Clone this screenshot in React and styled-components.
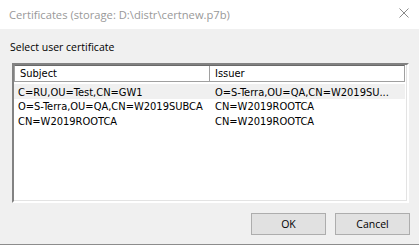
import React from "react";
import styled, { createGlobalStyle } from "styled-components";

const GlobalStyle = createGlobalStyle`
  html, body {
    margin: 0;
    padding: 0;
    background: #f0f0f0;
  }
`;

const uiFont = `"Open Sans", "Noto Sans", sans-serif`;
const listFont = `"DejaVu Sans Condensed", "DejaVu Sans", "Liberation Sans", sans-serif`;

const Window = styled.div`
  width: 419px;
  height: 245px;
  display: flex;
  flex-direction: column;
  background: #f0f0f0;
  box-sizing: border-box;
  border-bottom: 1px solid #8c8c8c;
  font-family: ${uiFont};
`;

const TitleBar = styled.div`
  height: 29px;
  flex: none;
  background: #ffffff;
  display: flex;
  align-items: center;
  justify-content: space-between;
  padding: 0 10px 0 9px;
`;

const Title = styled.span`
  font-size: 11.2px;
  color: #999999;
  margin-top: -1px;
`;

const CloseButton = styled.div`
  width: 10px;
  height: 10px;
  margin-top: -3px;
  display: flex;
`;

const Body = styled.div`
  flex: 1;
  display: flex;
  flex-direction: column;
  padding: 10px 10px 0 12px;
`;

const Label = styled.div`
  font-size: 10.5px;
  line-height: 16px;
  color: #000;
  margin-left: -2px;
`;

const ListBox = styled.div`
  margin-top: 8px;
  height: 140px;
  box-sizing: border-box;
  background: #ffffff;
  border-style: solid;
  border-width: 2px;
  border-color: #828282 #ffffff #ffffff #828282;
  box-shadow: inset -1px -1px 0 #e3e3e3;
  display: flex;
  flex-direction: column;
  font-family: ${listFont};
  font-size: 11px;
  color: #000;
`;

const Header = styled.div`
  display: flex;
  height: 17px;
  box-sizing: border-box;
  margin-right: 2px;
  border: 1px solid #a0a0a0;
  border-top-color: #696969;
  background: #ffffff;
`;

const HeaderCell = styled.div`
  width: ${(p) => p.width || "auto"};
  flex: ${(p) => (p.width ? "none" : 1)};
  box-sizing: border-box;
  padding-left: 5px;
  line-height: 16px;
  border-right: ${(p) => (p.last ? "none" : "1px solid #a0a0a0")};
`;

const Rows = styled.div`
  margin-top: 2px;
  margin-right: 2px;
`;

const Row = styled.div`
  display: flex;
  height: 14.5px;
  align-items: center;
  background: ${(p) => (p.selected ? "#f0f0f0" : "transparent")};
`;

const Cell = styled.div`
  width: ${(p) => p.width || "auto"};
  flex: ${(p) => (p.width ? "none" : 1)};
  box-sizing: border-box;
  padding-left: ${(p) => p.pad || "4px"};
  padding-top: 2px;
  white-space: nowrap;
  overflow: hidden;
`;

const ButtonRow = styled.div`
  display: flex;
  justify-content: flex-end;
  gap: 9px;
  margin-top: 10px;
  margin-right: -1px;
`;

const Button = styled.button`
  width: 75px;
  height: 22px;
  box-sizing: border-box;
  background: #e1e1e1;
  border: 1px solid #adadad;
  border-radius: 0;
  font-family: ${uiFont};
  font-size: 10.5px;
  color: #000;
  padding: 0;
`;

const rows = [
  { subject: "C=RU,OU=Test,CN=GW1", issuer: "O=S-Terra,OU=QA,CN=W2019SU...", selected: true },
  { subject: "O=S-Terra,OU=QA,CN=W2019SUBCA", issuer: "CN=W2019ROOTCA" },
  { subject: "CN=W2019ROOTCA", issuer: "CN=W2019ROOTCA" },
];

const App = () => {
  return (
    <Window>
      <GlobalStyle />
      <TitleBar>
        <Title>Certificates (storage: D:\distr\certnew.p7b)</Title>
        <CloseButton>
          <svg width="10" height="10" viewBox="0 0 10 10">
            <path d="M0.5 0.5 L9.5 9.5 M9.5 0.5 L0.5 9.5" stroke="#8a8a8a" strokeWidth="1" fill="none" />
          </svg>
        </CloseButton>
      </TitleBar>
      <Body>
        <Label>Select user certificate</Label>
        <ListBox>
          <Header>
            <HeaderCell width="195px">Subject</HeaderCell>
            <HeaderCell last>Issuer</HeaderCell>
          </Header>
          <Rows>
            {rows.map((r) => (
              <Row key={r.subject} selected={r.selected}>
                <Cell width="194px">{r.subject}</Cell>
                <Cell pad="7px">{r.issuer}</Cell>
              </Row>
            ))}
          </Rows>
        </ListBox>
        <ButtonRow>
          <Button>OK</Button>
          <Button>Cancel</Button>
        </ButtonRow>
      </Body>
    </Window>
  );
};

export default App;
